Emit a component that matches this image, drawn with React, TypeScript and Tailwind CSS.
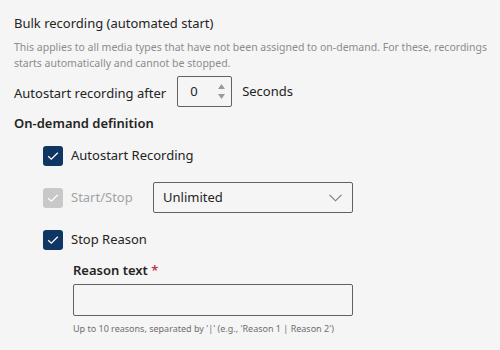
function Check({ disabled = false }: { disabled?: boolean }) {
  return (
    <span
      className={`flex h-5 w-5 shrink-0 items-center justify-center rounded-[3px] ${
        disabled ? "bg-[#c8c8c8]" : "bg-[#0f3662]"
      }`}
    >
      <svg width="12" height="10" viewBox="0 0 12 10" fill="none">
        <path d="M1.2 5.2 4.3 8.2 10.8 1.8" stroke="white" strokeWidth="1.3" />
      </svg>
    </span>
  );
}

function CheckRow({
  label,
  disabled = false,
  children,
}: {
  label: string;
  disabled?: boolean;
  children?: React.ReactNode;
}) {
  return (
    <div className="flex h-[31px] items-center">
      <Check disabled={disabled} />
      <span
        className={`ml-2 text-[13px] ${children ? "w-[82px]" : ""} ${
          disabled ? "text-[#a3a3a3]" : "text-[#242424]"
        }`}
      >
        {label}
      </span>
      {children}
    </div>
  );
}

export default function App() {
  return (
    <div
      className="h-[350px] w-[500px] overflow-hidden bg-[#f5f5f5] px-[14px] pt-[13px] text-[#242424]"
      style={{ fontFamily: '"Noto Sans", "Open Sans", sans-serif' }}
    >
      <h1 className="text-[13px] leading-5">Bulk recording (automated start)</h1>
      <p className="-mr-[14px] mt-[6px] text-[10.5px] leading-4 text-[#8c8c8c]">
        This applies to all media types that have not been assigned to on-demand. For these, recordings
        <br />
        starts automatically and cannot be stopped.
      </p>

      <div className="mt-[5px] flex items-center">
        <span className="pt-[4px] text-[13px]">Autostart recording after</span>
        <div className="ml-[11px] flex h-[31px] w-[55px] items-center justify-between rounded-[2px] border border-[#616161] pl-[12px] pr-[6px]">
          <span className="text-[13px]">0</span>
          <div className="flex flex-col gap-[5px]">
            <svg width="7" height="5" viewBox="0 0 7 5">
              <path d="M0 5 3.5 0 7 5Z" fill="#9a9a9a" />
            </svg>
            <svg width="7" height="5" viewBox="0 0 7 5">
              <path d="M0 0 3.5 5 7 0Z" fill="#9a9a9a" />
            </svg>
          </div>
        </div>
        <span className="ml-[10px] text-[13px]">Seconds</span>
      </div>

      <h2 className="mt-[6px] text-[13px] font-semibold leading-5">On-demand definition</h2>

      <div className="ml-[29px] mt-[7px] flex flex-col gap-[11px]">
        <CheckRow label="Autostart Recording" />
        <CheckRow label="Start/Stop" disabled>
          <div className="flex h-[31px] w-[200px] items-center justify-between rounded-[2px] border border-[#616161] pl-[9px] pr-[10px]">
            <span className="text-[13px]">Unlimited</span>
            <svg width="13" height="8" viewBox="0 0 13 8" fill="none">
              <path d="M.5.8 6.5 6.8 12.5.8" stroke="#7a7a7a" strokeWidth="1.1" />
            </svg>
          </div>
        </CheckRow>
        <CheckRow label="Stop Reason" />
      </div>

      <div className="ml-[59px] mt-[5px] w-[280px]">
        <div className="text-[13px] font-semibold leading-5">
          Reason text <span className="text-[#c4314b]">*</span>
        </div>
        <div className="mt-[4px] h-[32px] rounded-[2px] border border-[#616161]" />
        <p className="mt-[5px] text-[9px] leading-4 text-[#6f6f6f]">
          Up to 10 reasons, separated by '|' (e.g., 'Reason 1 | Reason 2')
        </p>
      </div>
    </div>
  );
}
